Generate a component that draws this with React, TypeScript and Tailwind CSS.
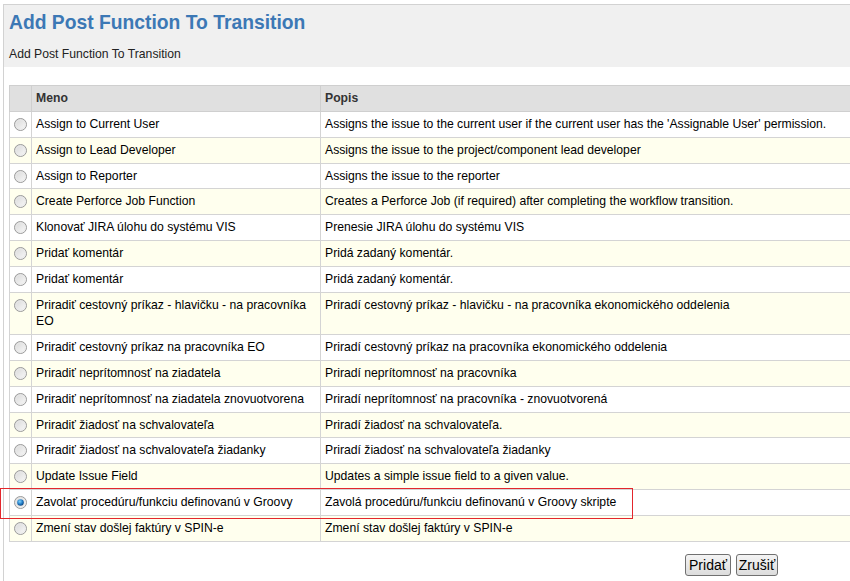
import React from 'react';

type Fn = { name: string; desc: string; selected?: boolean };

const functions: Fn[] = [
  { name: 'Assign to Current User', desc: "Assigns the issue to the current user if the current user has the 'Assignable User' permission." },
  { name: 'Assign to Lead Developer', desc: 'Assigns the issue to the project/component lead developer' },
  { name: 'Assign to Reporter', desc: 'Assigns the issue to the reporter' },
  { name: 'Create Perforce Job Function', desc: 'Creates a Perforce Job (if required) after completing the workflow transition.' },
  { name: 'Klonovať JIRA úlohu do systému VIS', desc: 'Prenesie JIRA úlohu do systému VIS' },
  { name: 'Pridať komentár', desc: 'Pridá zadaný komentár.' },
  { name: 'Pridať komentár', desc: 'Pridá zadaný komentár.' },
  { name: 'Priradiť cestovný príkaz - hlavičku - na pracovníka EO', desc: 'Priradí cestovný príkaz - hlavičku - na pracovníka ekonomického oddelenia' },
  { name: 'Priradiť cestovný príkaz na pracovníka EO', desc: 'Priradí cestovný príkaz na pracovníka ekonomického oddelenia' },
  { name: 'Priradiť neprítomnosť na ziadatela', desc: 'Priradí neprítomnosť na pracovníka' },
  { name: 'Priradiť neprítomnosť na ziadatela znovuotvorena', desc: 'Priradí neprítomnosť na pracovníka - znovuotvorená' },
  { name: 'Priradiť žiadosť na schvalovateľa', desc: 'Priradí žiadosť na schvalovateľa.' },
  { name: 'Priradiť žiadosť na schvalovateľa žiadanky', desc: 'Priradí žiadosť na schvalovateľa žiadanky' },
  { name: 'Update Issue Field', desc: 'Updates a simple issue field to a given value.' },
  { name: 'Zavolať procedúru/funkciu definovanú v Groovy', desc: 'Zavolá procedúru/funkciu definovanú v Groovy skripte', selected: true },
  { name: 'Zmení stav došlej faktúry v SPIN-e', desc: 'Zmení stav došlej faktúry v SPIN-e' },
];

const Radio: React.FC<{ checked?: boolean }> = ({ checked }) => (
  <svg width="13" height="13" viewBox="0 0 13 13" className="block">
    <defs>
      <linearGradient id="rfill" x1="0" y1="0" x2="1" y2="1">
        <stop offset="0" stopColor="#d6d6d6" />
        <stop offset="1" stopColor="#fbfbfb" />
      </linearGradient>
      <radialGradient id="rdot" cx="0.4" cy="0.35" r="0.7">
        <stop offset="0" stopColor="#7fd3ff" />
        <stop offset="0.6" stopColor="#1f78c2" />
        <stop offset="1" stopColor="#0d3f73" />
      </radialGradient>
    </defs>
    <circle cx="6.5" cy="6.5" r="6" fill="url(#rfill)" stroke="#9a9a9a" strokeWidth="1" />
    <circle cx="6.5" cy="6.5" r="4.6" fill="none" stroke="#e8e8e8" strokeWidth="0.8" />
    {checked && <circle cx="6.5" cy="6.5" r="3.3" fill="url(#rdot)" />}
  </svg>
);

const App: React.FC = () => {
  return (
    <div className="w-[850px] h-[581px] overflow-hidden bg-white pt-[4px] pl-[3px] font-['Liberation_Sans',Arial,sans-serif] text-[12.2px] text-black">
      <div className="min-h-[577px] border-l border-t border-[#d2d2d2]">
        {/* Header */}
        <div className="bg-[#f0f0f0] pl-[5px] pt-[6px] pb-[5px]">
          <h1 className="text-[19.3px] leading-[24px] font-bold text-[#3c78b5]">
            Add Post Function To Transition
          </h1>
          <p className="mt-[11px] leading-[16px] text-[#222]">Add Post Function To Transition</p>
        </div>

        {/* Table */}
        <div className="mt-[18px] ml-[5px]">
          <table className="table-fixed border-collapse w-[870px] leading-[16.8px]">
            <colgroup>
              <col className="w-[22px]" />
              <col className="w-[289px]" />
              <col />
            </colgroup>
            <thead>
              <tr className="bg-[#e0e0e0]">
                <th className="border border-[#cfcfcf] h-[26px]"></th>
                <th className="border border-[#cfcfcf] px-[4px] text-left font-bold text-[#333]">Meno</th>
                <th className="border border-[#cfcfcf] px-[4px] text-left font-bold text-[#333]">Popis</th>
              </tr>
            </thead>
            <tbody>
              {functions.map((fn, i) => (
                <tr key={i} className={i % 2 === 1 ? 'bg-[#ffffee]' : 'bg-white'}>
                  <td className="relative border border-[#d4d4d4] align-top pt-[6px] pl-[4px]">
                    <Radio checked={fn.selected} />
                    {fn.selected && (
                      <span className="absolute left-[-10px] top-[-2px] h-[31px] w-[633px] border border-[#e3262c] pointer-events-none" />
                    )}
                  </td>
                  <td className="border border-[#d4d4d4] px-[4px] py-[4px] align-top">{fn.name}</td>
                  <td className="border border-[#d4d4d4] px-[4px] py-[4px] align-top whitespace-nowrap">{fn.desc}</td>
                </tr>
              ))}
            </tbody>
          </table>

          {/* Buttons */}
          <div className="flex justify-end gap-[5px] pr-[72px] mt-[12px] w-[841px]">
            <button className="h-[22px] w-[46px] rounded-[3px] border border-[#707070] bg-gradient-to-b from-[#f4f4f4] to-[#dcdcdc] text-[14px] text-black leading-none">
              Pridať
            </button>
            <button className="h-[22px] w-[42px] rounded-[3px] border border-[#707070] bg-gradient-to-b from-[#f4f4f4] to-[#dcdcdc] text-[14px] text-black leading-none">
              Zrušiť
            </button>
          </div>
        </div>
      </div>
    </div>
  );
};

export default App;
